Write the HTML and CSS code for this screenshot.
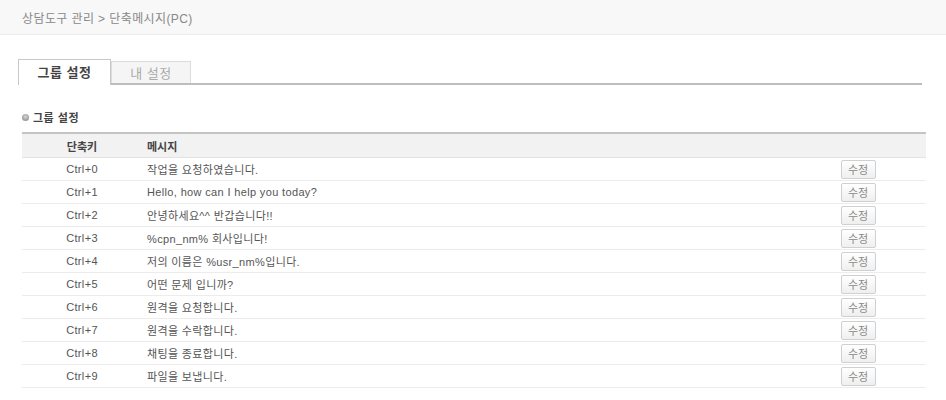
FILE: index.html
```html
<!DOCTYPE html>
<html lang="ko">
<head>
<meta charset="utf-8">
<link rel="stylesheet" href="styles.css">
</head>
<body>
<div class="topbar"><span class="crumb">상담도구 관리 &gt; 단축메시지(PC)</span></div>
<div class="content">
  <div class="tabs">
    <div class="tab active">그룹 설정</div>
    <div class="tab">내 설정</div>
  </div>
  <h3 class="section-title"><span class="dot"></span>그룹 설정</h3>
  <table class="grid">
    <thead>
      <tr><th class="c-key">단축키</th><th class="c-msg">메시지</th><th class="c-btn"></th></tr>
    </thead>
    <tbody>
      <tr><td class="c-key">Ctrl+0</td><td class="c-msg">작업을 요청하였습니다.</td><td class="c-btn"><button class="btn">수정</button></td></tr>
      <tr><td class="c-key">Ctrl+1</td><td class="c-msg">Hello, how can I help you today?</td><td class="c-btn"><button class="btn">수정</button></td></tr>
      <tr><td class="c-key">Ctrl+2</td><td class="c-msg">안녕하세요^^ 반갑습니다!!</td><td class="c-btn"><button class="btn">수정</button></td></tr>
      <tr><td class="c-key">Ctrl+3</td><td class="c-msg">%cpn_nm% 회사입니다!</td><td class="c-btn"><button class="btn">수정</button></td></tr>
      <tr><td class="c-key">Ctrl+4</td><td class="c-msg">저의 이름은 %usr_nm%입니다.</td><td class="c-btn"><button class="btn">수정</button></td></tr>
      <tr><td class="c-key">Ctrl+5</td><td class="c-msg">어떤 문제 입니까?</td><td class="c-btn"><button class="btn">수정</button></td></tr>
      <tr><td class="c-key">Ctrl+6</td><td class="c-msg">원격을 요청합니다.</td><td class="c-btn"><button class="btn">수정</button></td></tr>
      <tr><td class="c-key">Ctrl+7</td><td class="c-msg">원격을 수락합니다.</td><td class="c-btn"><button class="btn">수정</button></td></tr>
      <tr><td class="c-key">Ctrl+8</td><td class="c-msg">채팅을 종료합니다.</td><td class="c-btn"><button class="btn">수정</button></td></tr>
      <tr><td class="c-key">Ctrl+9</td><td class="c-msg">파일을 보냅니다.</td><td class="c-btn"><button class="btn">수정</button></td></tr>
    </tbody>
  </table>
</div>
</body>
</html>
```
FILE: styles.css
```css
html, body { margin: 0; padding: 0; background: #fff; }
body {
  font-family: "Liberation Sans", "Noto Sans CJK KR", sans-serif;
  font-size: 11px;
  color: #444;
}
.topbar {
  height: 34px;
  background: #f8f8f8;
  border-bottom: 1px solid #ebebeb;
  display: flex;
  align-items: center;
  padding-left: 22px;
}
.crumb { font-size: 12px; color: #888; letter-spacing: 0.4px; }
.content { padding: 26px 20px 0 18px; }
.tabs {
  display: flex;
  align-items: flex-end;
  border-bottom: 2px solid #bdbdbd;
  width: 904px;
  height: 22px;
}
.tab {
  box-sizing: border-box;
  height: 22px;
  width: 80px;
  border: 1px solid #dcdcdc;
  border-bottom: none;
  background: #f5f5f5;
  color: #aaa;
  font-size: 13px;
  display: flex;
  align-items: center;
  justify-content: center;
  letter-spacing: 0.5px;
}
.tab.active {
  width: 93px;
  background: #fff;
  border: 1px solid #c8c8c8;
  border-bottom: none;
  color: #444;
  font-weight: bold;
  margin-bottom: -2px;
  height: 26px;
  padding-bottom: 2px;
}
.section-title {
  margin: 25px 0 0 4px;
  font-size: 11px;
  font-weight: bold;
  color: #444;
  display: flex;
  align-items: center;
  gap: 4px;
  height: 14px;
  letter-spacing: 0.5px;
}
.dot {
  width: 7px; height: 7px; border-radius: 50%;
  background: radial-gradient(circle at 50% 40%, #d8d8d8 0, #a0a0a0 60%, #888 100%);
  box-sizing: border-box;
}
.grid {
  margin: 8px 0 0 4px;
  width: 904px;
  border-collapse: collapse;
  border-top: 2px solid #c4c4c4;
}
.grid th {
  background: #f2f2f2;
  height: 23px;
  font-weight: bold;
  color: #444;
  font-size: 11px;
  padding: 0;
  border-bottom: 1px solid #e3e3e3;
}
.grid td {
  height: 22px;
  padding: 0;
  border-bottom: 1px solid #ececec;
  color: #555;
  letter-spacing: 0.35px;
}
.c-key { width: 120px; text-align: center; }
.c-msg { text-align: left; padding-left: 5px !important; }
.c-btn { width: 136px; text-align: center; }
.btn {
  font-family: "Liberation Sans", "Noto Sans CJK KR", sans-serif;
  font-size: 11px;
  color: #888;
  width: 35px;
  height: 19px;
  padding: 0;
  border: 1px solid #d0d0d0;
  border-radius: 2px;
  background: linear-gradient(#ffffff, #efefef);
  display: inline-flex;
  align-items: center;
  justify-content: center;
  vertical-align: middle;
}
```
